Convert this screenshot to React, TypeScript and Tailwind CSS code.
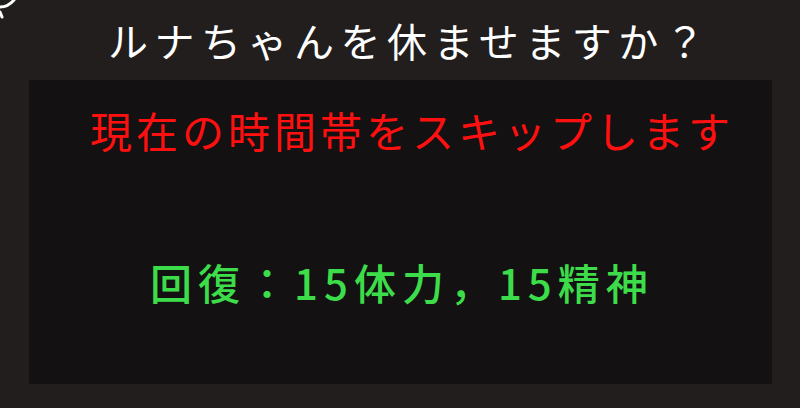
import React from "react";

const jp = { fontFamily: '"Noto Sans CJK JP", "Noto Sans", sans-serif' };

function BubbleEdge() {
  // corner of a neighbouring speech bubble peeking in
  return (
    <svg className="absolute left-0 top-0" width="24" height="24" viewBox="0 0 24 24" fill="none">
      <path d="M0 7 Q8 7 14 0" stroke="#fff" strokeWidth="3" strokeLinecap="round" />
      <path d="M0 12 L2 17" stroke="#fff" strokeWidth="3" strokeLinecap="round" />
    </svg>
  );
}

export default function App() {
  return (
    <div className="relative w-[800px] h-[408px] bg-[#221e1e] flex flex-col overflow-hidden" style={jp}>
      <BubbleEdge />
      <div className="h-[80px] flex items-center pl-[108px]">
        <h1 className="text-white text-[40px] leading-[48px] tracking-[6.5px] font-normal">
          ルナちゃんを休ませますか？
        </h1>
      </div>
      <div className="ml-[29px] w-[743px] h-[304px] bg-[#131111] flex flex-col">
        <p className="mt-[26px] pl-[61px] text-[#ff1010] text-[42px] leading-[48px] tracking-[4px]">
          現在の時間帯をスキップします
        </p>
        <p className="mt-[104px] pl-[121px] text-[#3ddc4a] text-[42px] leading-[48px] tracking-[6px] font-medium">
          回復：15体力，15精神
        </p>
      </div>
    </div>
  );
}
